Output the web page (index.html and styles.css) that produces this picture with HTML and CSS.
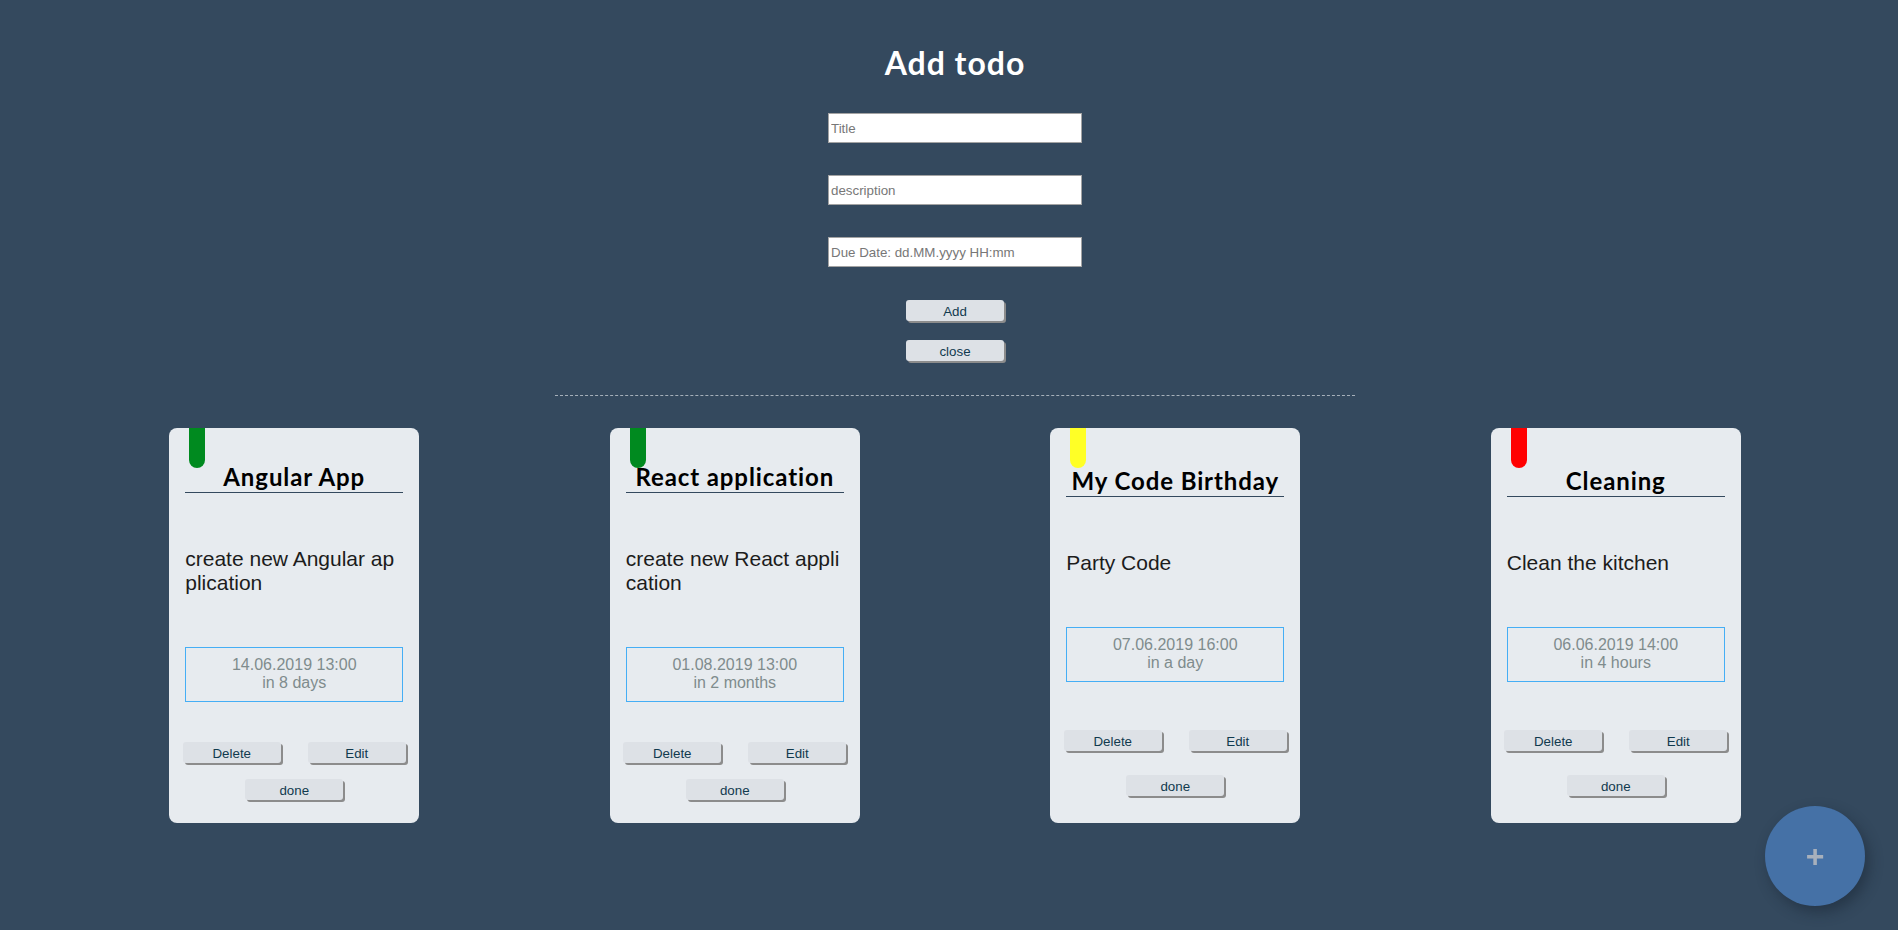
FILE: index.html
```html
<!DOCTYPE html>
<html lang="en">
<head>
<meta charset="utf-8">
<title>Todo</title>
<link rel="stylesheet" href="styles.css">
</head>
<body>
<section class="add-form">
  <h1 class="add-title">Add todo</h1>
  <input class="field" type="text" placeholder="Title">
  <input class="field" type="text" placeholder="description">
  <input class="field" type="text" placeholder="Due Date: dd.MM.yyyy HH:mm">
  <button class="btn btn-add">Add</button>
  <button class="btn btn-close">close</button>
</section>
<hr class="divider">
<section class="todo-list">
  <article class="card">
    <span class="prio prio-green"></span>
    <div class="card-main">
      <h2 class="card-title">Angular App</h2>
      <p class="card-desc">create new Angular application</p>
      <div class="due">14.06.2019 13:00<br>in 8 days</div>
    </div>
    <div class="actions"><button class="btn">Delete</button><button class="btn">Edit</button></div>
    <div class="done-row"><button class="btn">done</button></div>
  </article>
  <article class="card">
    <span class="prio prio-green"></span>
    <div class="card-main">
      <h2 class="card-title">React application</h2>
      <p class="card-desc">create new React application</p>
      <div class="due">01.08.2019 13:00<br>in 2 months</div>
    </div>
    <div class="actions"><button class="btn">Delete</button><button class="btn">Edit</button></div>
    <div class="done-row"><button class="btn">done</button></div>
  </article>
  <article class="card">
    <span class="prio prio-yellow"></span>
    <div class="card-main">
      <h2 class="card-title">My Code Birthday</h2>
      <p class="card-desc">Party Code</p>
      <div class="due">07.06.2019 16:00<br>in a day</div>
    </div>
    <div class="actions"><button class="btn">Delete</button><button class="btn">Edit</button></div>
    <div class="done-row"><button class="btn">done</button></div>
  </article>
  <article class="card">
    <span class="prio prio-red"></span>
    <div class="card-main">
      <h2 class="card-title">Cleaning</h2>
      <p class="card-desc">Clean the kitchen</p>
      <div class="due">06.06.2019 14:00<br>in 4 hours</div>
    </div>
    <div class="actions"><button class="btn">Delete</button><button class="btn">Edit</button></div>
    <div class="done-row"><button class="btn">done</button></div>
  </article>
</section>
<button class="fab">+</button>
</body>
</html>
```
FILE: styles.css
```css
html, body {
  height: 100%;
}
body {
  margin: 0;
  padding: 0 0 0 12px;
  background: #34495e;
  font-family: "Liberation Sans", Arial, sans-serif;
  overflow: hidden;
}
.add-form {
  display: flex;
  flex-direction: column;
  align-items: center;
}
.add-title {
  margin: 43px 0 0;
  font-family: "Lato", "Open Sans", sans-serif;
  font-weight: 700;
  font-size: 32px;
  line-height: 40px;
  letter-spacing: 1px;
  color: #ffffff;
}
.field {
  box-sizing: border-box;
  width: 254px;
  height: 30px;
  margin: 30px 0 0;
  padding: 1px 2px;
  border: 1px solid #a3a3a3;
  background: #ffffff;
  font-family: "Liberation Sans", Arial, sans-serif;
  font-size: 13.33px;
  color: #222;
  outline: none;
}
.field + .field {
  margin-top: 32px;
}
.field::placeholder {
  color: #777;
}
.btn {
  width: 98px;
  height: 21px;
  padding: 1px 0 0;
  border: 0;
  border-radius: 3px;
  background: #dde1e6;
  box-shadow: 2px 2px 0 #8c8c8c;
  font-family: "Liberation Sans", Arial, sans-serif;
  font-size: 13.33px;
  color: #113a4e;
  cursor: pointer;
}
.btn-add {
  margin-top: 33px;
}
.btn-close {
  margin-top: 19px;
}
.divider {
  width: 800px;
  margin: 34px auto 0;
  border: 0;
  border-top: 1px dashed #a6b0ba;
  height: 0;
}
.todo-list {
  display: flex;
  justify-content: space-around;
  padding: 0 62px;
  margin-top: 32px;
}
.card {
  position: relative;
  box-sizing: border-box;
  width: 250px;
  height: 395px;
  background: #e7ebef;
  border-radius: 8px;
  display: flex;
  flex-direction: column;
  justify-content: space-around;
}
.prio {
  position: absolute;
  top: 0;
  left: 20px;
  width: 16px;
  height: 40px;
  border-radius: 0 0 8px 8px;
}
.prio-green { background: #008a1f; }
.prio-yellow { background: #ffff26; }
.prio-red { background: #ff0000; }
.card-main {
  padding: 26px 16px 0;
}
.card-title {
  margin: 0;
  font-family: "Lato", "Open Sans", sans-serif;
  font-weight: 700;
  font-size: 24px;
  line-height: 30px;
  letter-spacing: 0.9px;
  text-align: center;
  color: #000;
  border-bottom: 1px solid #34495e;
  white-space: nowrap;
}
.card-desc {
  margin: 54px 0 52px;
  font-size: 21px;
  line-height: 24px;
  color: #1c1c1c;
  word-break: break-all;
}
.due {
  border: 1px solid #45aef5;
  padding: 8px 0 9px;
  text-align: center;
  font-size: 16px;
  line-height: 18px;
  color: #7f8c8d;
}
.actions {
  display: flex;
  justify-content: space-around;
  margin-top: 24px;
}
.done-row {
  display: flex;
  justify-content: center;
  margin-bottom: 15px;
}
.fab {
  position: fixed;
  right: 33px;
  bottom: 24px;
  width: 100px;
  height: 100px;
  border: 0;
  border-radius: 50%;
  background: #4571a6;
  box-shadow: 4px 6px 14px rgba(20, 30, 45, 0.45);
  color: #a7b0bc;
  font-family: "Liberation Sans", Arial, sans-serif;
  font-weight: 700;
  font-size: 32px;
  line-height: 100px;
  padding: 0;
  text-align: center;
}
```
